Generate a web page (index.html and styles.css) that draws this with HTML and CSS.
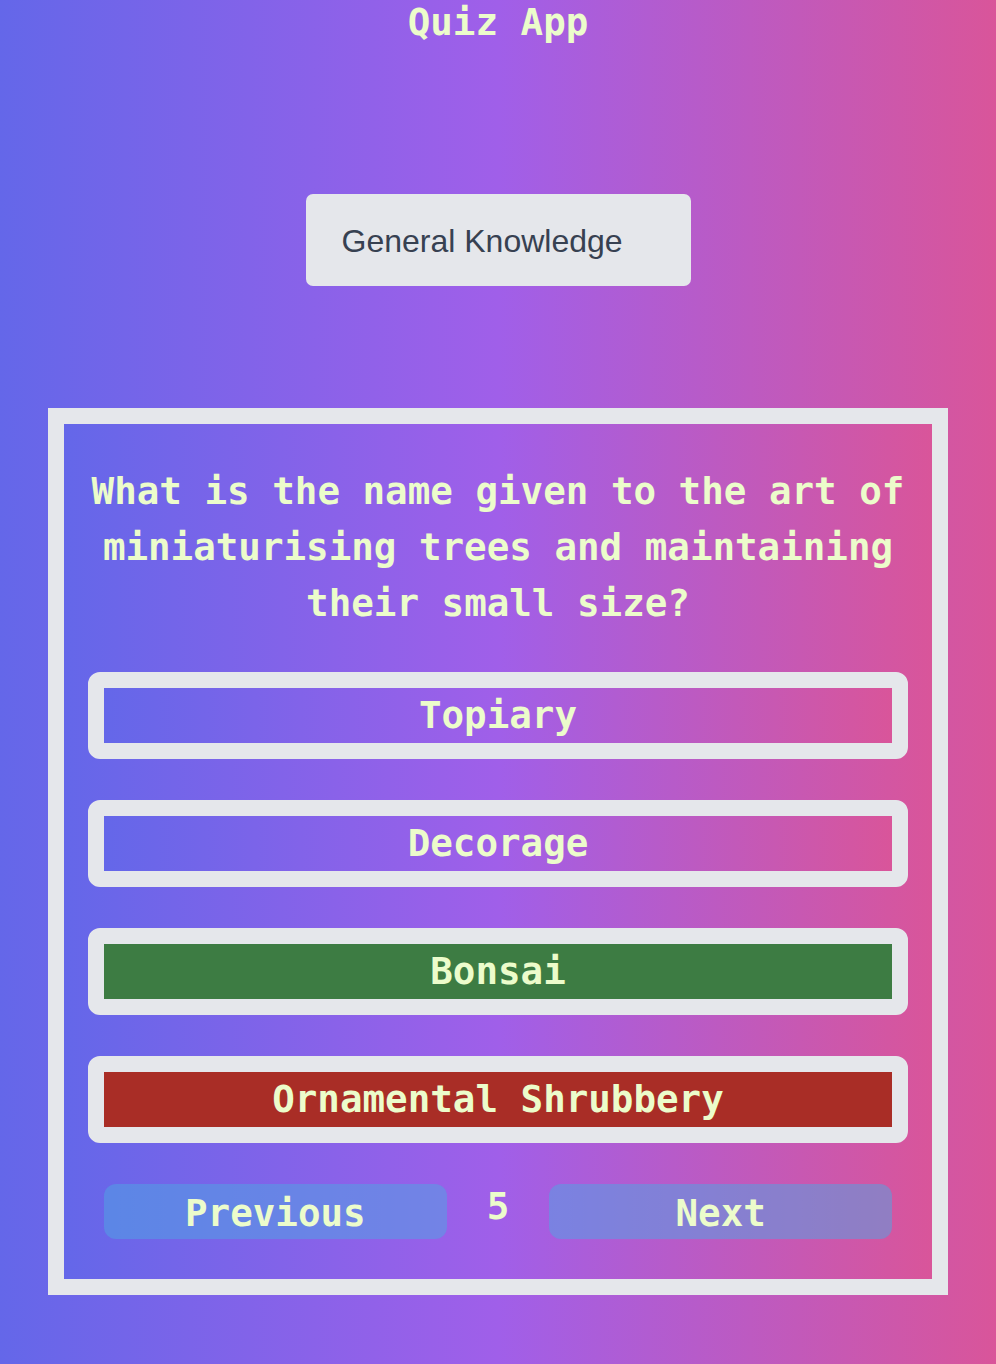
FILE: index.html
```html
<!DOCTYPE html>
<html lang="en">
<head>
<meta charset="utf-8">
<title>Quiz App</title>
<link rel="stylesheet" href="styles.css">
</head>
<body>
<main class="app">
  <h1 class="title">Quiz App</h1>
  <div class="category">General Knowledge</div>
  <section class="card">
    <p class="question">What is the name given to the art of miniaturising trees and maintaining their small size?</p>
    <div class="answers">
      <div class="answer">Topiary</div>
      <div class="answer">Decorage</div>
      <div class="answer answer-correct">Bonsai</div>
      <div class="answer answer-wrong">Ornamental Shrubbery</div>
    </div>
    <div class="nav">
      <button class="nav-btn">Previous</button>
      <span class="counter">5</span>
      <button class="nav-btn">Next</button>
    </div>
  </section>
</main>
</body>
</html>
```
FILE: styles.css
```css
html, body {
  margin: 0;
  padding: 0;
}
body {
  min-height: 100vh;
  background: linear-gradient(to right, #6467e9, #a05fe9, #d9559a);
  font-family: "DejaVu Sans Mono", "Liberation Mono", monospace;
  color: #ecfccb;
}
.app {
  display: flex;
  flex-direction: column;
  align-items: center;
}
.title {
  margin: 0;
  font-size: 37.5px;
  line-height: normal;
  font-weight: bold;
  text-align: center;
}
.category {
  margin-top: 150px;
  width: 385px;
  height: 92px;
  box-sizing: border-box;
  padding-left: 36px;
  padding-top: 3px;
  display: flex;
  align-items: center;
  background: #e5e7eb;
  border-radius: 7px;
  font-family: "Liberation Sans", Arial, sans-serif;
  font-size: 32px;
  color: #374151;
}
.card {
  margin-top: 122px;
  width: 900px;
  box-sizing: border-box;
  border: 16px solid #e5e7eb;
  background: linear-gradient(to right, #6467e9, #a05fe9, #d9559a);
  padding: 39px 24px 40px;
}
.question {
  margin: 0;
  font-size: 37.5px;
  line-height: 56px;
  font-weight: bold;
  text-align: center;
}
.answers {
  margin-top: 41px;
  display: flex;
  flex-direction: column;
  gap: 41px;
}
.answer {
  border: 16px solid #e5e7eb;
  border-radius: 12px;
  height: 55px;
  line-height: 55px;
  text-align: center;
  font-size: 37.5px;
  font-weight: bold;
  background: linear-gradient(to right, #6467e9, #a05fe9, #d9559a);
}
.answer-correct {
  background: #3d7c43;
}
.answer-wrong {
  background: #a92d26;
}
.nav {
  margin-top: 41px;
  padding: 0 16px;
  display: flex;
  align-items: flex-start;
  gap: 40px;
}
.nav-btn {
  flex: 1;
  height: 55px;
  border: none;
  border-radius: 12px;
  background: rgba(77, 166, 228, 0.5);
  color: #ecfccb;
  font-family: "DejaVu Sans Mono", "Liberation Mono", monospace;
  font-size: 37.5px;
  font-weight: bold;
  line-height: 55px;
  padding: 0;
  padding-top: 2px;
}
.counter {
  font-size: 37.5px;
  font-weight: bold;
  line-height: normal;
}
```
